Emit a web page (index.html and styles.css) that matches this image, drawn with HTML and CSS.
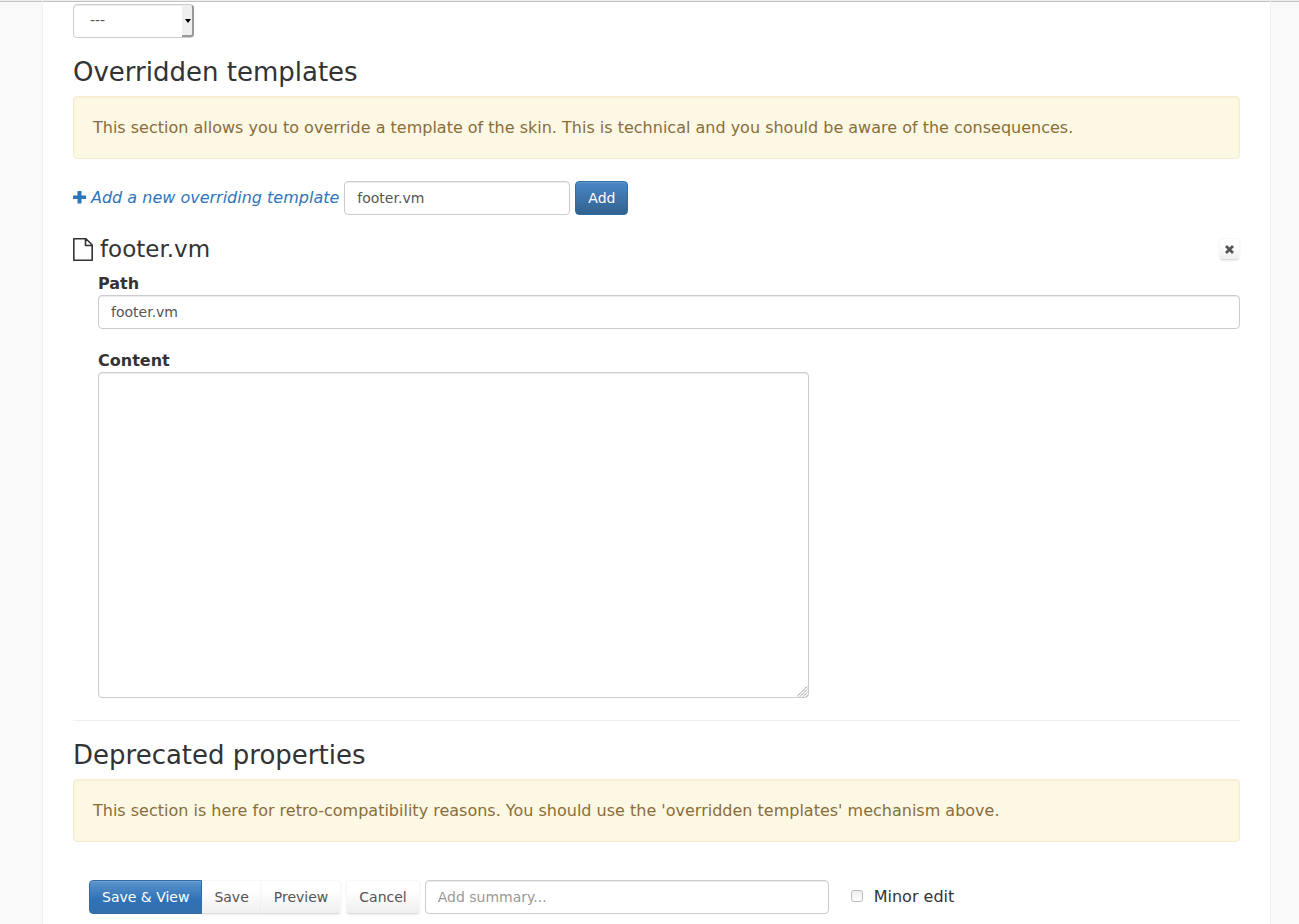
FILE: index.html
```html
<!DOCTYPE html>
<html lang="en">
<head>
  <meta charset="UTF-8">
  <meta name="viewport" content="width=device-width, initial-scale=1.0">
  <title>Edit skin</title>
  <link rel="stylesheet" href="styles.css">
</head>
<body>
  <main class="content">
    <form>
      <div class="select-wrap">
        <select class="form-control" aria-label="Base skin">
          <option>---</option>
        </select>
        <span class="select-arrow"></span>
      </div>

      <h2>Overridden templates</h2>
      <div class="warning">This section allows you to override a template of the skin. This is technical and you should be aware of the consequences.</div>

      <div class="add-template">
        <label for="new-template">
          <svg class="icon-plus" viewBox="0 0 13 13" width="13" height="13"><path d="M5 0h3q.5 0 .5.5V4.500H12.500q.5 0 .5.5v2.500q0 .5-.5.5H8.500v4q0 .5-.5.5H5q-.5 0-.5-.5V8H.5Q0 8 0 7.500V5q0-.5.5-.5h4V.5Q4.500 0 5 0z" fill="currentColor"/></svg>
          <em>Add a new overriding template</em>
        </label>
        <input type="text" id="new-template" class="form-control" value="footer.vm">
        <button type="button" class="btn btn-primary">Add</button>
      </div>

      <section class="template">
        <div class="template-header">
          <h3>
            <svg class="icon-file" viewBox="0 0 20 23" width="20" height="23" fill="none" stroke="currentColor" stroke-width="1.600" stroke-linejoin="round"><path d="M.8.8H13l6.200 6.200v15.200H.8zM12.500 1v6.500H19"/></svg>
            footer.vm
          </h3>
          <button type="button" class="btn btn-default btn-delete" aria-label="Delete">
            <svg viewBox="0 0 9 9" width="9" height="9" stroke="currentColor" stroke-width="2.800"><path d="M1 1l7 7M8 1l-7 7"/></svg>
          </button>
        </div>
        <div class="template-body">
          <label for="path">Path</label>
          <input type="text" id="path" class="form-control" value="footer.vm">
          <label for="template-content">Content</label>
          <div class="textarea-wrap">
            <textarea id="template-content" class="form-control"></textarea>
            <svg class="grip" viewBox="0 0 11 11" width="11" height="11" stroke="#777" stroke-width="1" stroke-dasharray="1.400 .6"><path d="M0 10.500L10.500 0M3 10.500L10.500 3M6 10.500L10.500 6M9 10.500L10.500 9"/></svg>
          </div>
        </div>
      </section>

      <hr>

      <h2>Deprecated properties</h2>
      <div class="warning">This section is here for retro-compatibility reasons. You should use the 'overridden templates' mechanism above.</div>

      <div class="actions">
        <div class="btn-group">
          <button type="button" class="btn btn-primary btn-save">Save &amp; View</button>
          <button type="button" class="btn btn-default">Save</button>
          <button type="button" class="btn btn-default">Preview</button>
        </div>
        <button type="button" class="btn btn-default">Cancel</button>
        <input type="text" class="form-control summary" placeholder="Add summary..." aria-label="Summary">
        <label class="minor-edit"><input type="checkbox"> Minor edit</label>
      </div>
    </form>
  </main>
</body>
</html>
```
FILE: styles.css
```css
* {
  box-sizing: border-box;
}
body {
  margin: 0;
  padding: 0 28px 0 42px;
  border-top: 1px solid #eee;
  background: #f9f9f9;
  box-shadow: inset 0 1px 0 #c3c3c3;
  color: #333;
  font: 16px/23px "DejaVu Sans", sans-serif;
}
.content {
  min-height: 922px;
  padding: 3px 30px 10px;
  background: #fff;
  border: solid #f0f0f0;
  border-width: 0 1px;
  box-shadow: inset 0 1px 0 #c3c3c3;
}
h2, h3 {
  font-weight: normal;
}
h2 {
  margin: 19px 0 9px;
  font-size: 26px;
  line-height: 30px;
}
h3 {
  display: flex;
  align-items: center;
  gap: 7px;
  margin: 0;
  font-size: 23px;
  line-height: 26px;
}
hr {
  margin: 22px 0 0;
  border: 0;
  border-top: 1px solid #eee;
}
.form-control {
  display: block;
  width: 100%;
  height: 34px;
  padding: 6px 12px;
  border: 1px solid #ccc;
  border-radius: 4px;
  background: #fff;
  box-shadow: inset 0 1px 1px rgba(0, 0, 0, 0.08);
  color: #555;
  font: 14px/20px "DejaVu Sans", sans-serif;
}
.form-control::placeholder {
  color: #999;
}

/* Base skin list */
.select-wrap {
  position: relative;
  width: 121px;
}
.select-wrap select {
  appearance: none;
  padding: 5px 12px 7px 16px;
}
.select-arrow {
  position: absolute;
  top: 1px;
  right: 0;
  width: 12px;
  height: 32px;
  border-right: 2px solid #999;
  border-bottom: 2px solid #999;
  border-radius: 0 3px 3px 0;
  background: #f0efee;
  pointer-events: none;
}
.select-arrow::after {
  content: "";
  position: absolute;
  top: 14px;
  left: 3px;
  border: 3px solid transparent;
  border-top: 4px solid #000;
  border-bottom: 0;
}

.warning {
  padding: 19px;
  border: 1px solid #faebcc;
  border-radius: 4px;
  background: #fcf8e3;
  box-shadow: inset 0 1px 2px rgba(138, 109, 59, 0.06);
  color: #8a6d3b;
}

.btn {
  height: 34px;
  padding: 6px 12px;
  border: 1px solid transparent;
  border-radius: 4px;
  font: 14px/20px "DejaVu Sans", sans-serif;
  cursor: pointer;
}
.btn-primary {
  border-color: #2e6da4;
  background: linear-gradient(#4a86c5, #32628f);
  box-shadow: inset 0 1px 0 rgba(255, 255, 255, 0.15);
  color: #fff;
}
.btn-default {
  border-color: #f7f7f7;
  border-bottom-color: #ddd;
  background: linear-gradient(#fff 30%, #efefef);
  box-shadow: 0 1px 2px rgba(0, 0, 0, 0.08);
  color: #555;
}

.add-template {
  display: flex;
  align-items: center;
  gap: 5px;
  margin: 22px 0 21px;
  color: #2f75b9;
}
.add-template label {
  display: flex;
  align-items: center;
  gap: 5px;
  padding-bottom: 2px;
}
.add-template .form-control {
  width: 226px;
}

.template-header {
  display: flex;
  justify-content: space-between;
  align-items: center;
}
.btn-delete {
  display: grid;
  place-items: center;
  width: 21px;
  height: 22px;
  padding: 0;
}
.template-body {
  padding: 10px 0 0 25px;
}
.template-body label {
  display: block;
  font-weight: bold;
}
.template-body input {
  margin-bottom: 20px;
}
.textarea-wrap {
  position: relative;
  width: 711px;
  max-width: 100%;
}
.textarea-wrap textarea {
  height: 326px;
  resize: none;
}
.grip {
  position: absolute;
  right: 1px;
  bottom: 1px;
  pointer-events: none;
}

.actions {
  display: flex;
  align-items: center;
  gap: 5px;
  padding: 38px 16px 0;
}
.btn-group {
  display: flex;
}
.btn-group .btn {
  border-radius: 0;
}
.btn-group .btn + .btn {
  margin-left: -1px;
}
.btn-group .btn:first-child {
  position: relative;
  border-radius: 4px 0 0 4px;
}
.btn-group .btn:last-child {
  border-radius: 0 4px 4px 0;
}
.btn-save {
  background: linear-gradient(#5b93cd, #3071b5 60%, #3570ac);
}
.summary {
  width: 404px;
}
.minor-edit {
  display: flex;
  align-items: center;
  gap: 11px;
  margin-left: 17px;
  padding-bottom: 2px;
}
.minor-edit input {
  appearance: none;
  width: 12px;
  height: 12px;
  margin: 0;
  border: 1px solid #bbb;
  border-radius: 3px;
  background: linear-gradient(#f0f0f0, #fff);
}
.minor-edit input:checked {
  background: #2f75b9;
}
```
